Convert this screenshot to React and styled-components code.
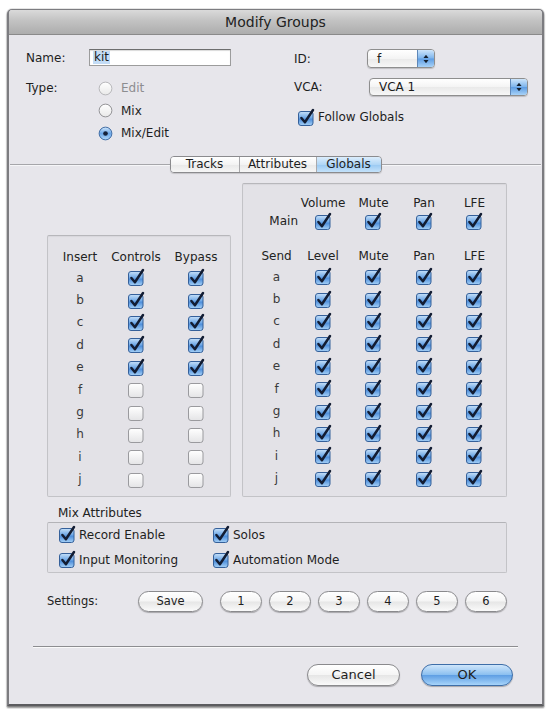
import React from "react";
import styled, { createGlobalStyle } from "styled-components";

const GlobalStyle = createGlobalStyle`
  html, body { margin: 0; padding: 0; background: #ffffff; }
  body {
    font-family: "DejaVu Sans", "Liberation Sans", sans-serif;
    font-size: 12px;
    color: #1c1c1c;
  }
`;

const Page = styled.div`
  box-sizing: border-box;
  width: 548px;
  height: 709px;
  padding: 9px 0 0 7px;
`;

const Window = styled.div`
  box-sizing: border-box;
  width: 537px;
  height: 697px;
  display: flex;
  flex-direction: column;
  background: #e7e6eb;
  border: 2px solid #7c7c80;
  border-top-width: 1px;
  border-bottom-color: #5c5c5f;
  border-radius: 5px 5px 0 0;
  box-shadow: 0 0 0 1px rgba(0, 0, 0, 0.1), 0 2px 2px rgba(0, 0, 0, 0.45);
  overflow: hidden;
`;

const TitleBar = styled.div`
  flex: none;
  height: 24px;
  display: flex;
  align-items: center;
  justify-content: center;
  background: linear-gradient(#dadada, #c2c2c2 45%, #adadad);
  border-bottom: 1px solid #8a8a8a;
  font-size: 14px;
  color: #222;
`;

const TopSection = styled.div`
  display: flex;
  padding: 14px 0 0 17px;
`;

const Column = styled.div`
  display: flex;
  flex-direction: column;
  width: ${(p) => (p.$w ? `${p.$w}px` : "auto")};
`;

const FieldRow = styled.div`
  display: flex;
  align-items: center;
  height: ${(p) => p.$h}px;
  margin-top: ${(p) => p.$mt || 0}px;
`;

const Label = styled.span`
  flex: none;
  width: ${(p) => p.$w}px;
  color: #1e1e1e;
`;

const TextInput = styled.div`
  box-sizing: border-box;
  width: 142px;
  height: 17px;
  background: #fff;
  border: 1px solid #9c9c9c;
  border-top-color: #6e6e6e;
  box-shadow: inset 0 1px 1px rgba(0, 0, 0, 0.15);
  display: flex;
  align-items: center;
  padding-left: 3px;
`;

const Selected = styled.span`
  background: #c3dcf6;
  padding: 0 1px;
  line-height: 13px;
`;

const Select = styled.div`
  box-sizing: border-box;
  width: ${(p) => p.$w}px;
  height: ${(p) => p.$h}px;
  margin-left: ${(p) => p.$ml || 0}px;
  display: flex;
  align-items: stretch;
  background: linear-gradient(#ffffff, #f4f4f4 50%, #e9e9e9 51%, #f7f7f7);
  border: 1px solid #8e8e8e;
  border-radius: 4px;
  box-shadow: 0 1px 1px rgba(0, 0, 0, 0.18);
  overflow: hidden;
`;

const SelectText = styled.span`
  flex: 1;
  display: flex;
  align-items: center;
  padding-left: 9px;
  font-size: 12px;
`;

const Stepper = styled.span`
  flex: none;
  width: 16px;
  display: flex;
  align-items: center;
  justify-content: center;
  background: linear-gradient(#cde5fb, #7fb5ec 48%, #5e9de3 52%, #a8d2f7);
  border-left: 1px solid #5e87b8;
`;

const OptionRow = styled.label`
  display: flex;
  align-items: center;
  gap: ${(p) => (p.$gap != null ? p.$gap : 4)}px;
  margin-left: ${(p) => p.$ml || 0}px;
  color: ${(p) => (p.$disabled ? "#8d8d90" : "#1e1e1e")};
  white-space: nowrap;
`;

const IconSvg = styled.svg`
  flex: none;
  display: block;
`;

const TabPane = styled.div`
  margin: 19px 1px 0;
  border-top: 1px solid #a6a6aa;
  box-shadow: inset 0 1px 0 #f6f6f8;
`;

const TabStripRow = styled.div`
  display: flex;
  justify-content: center;
  margin-top: -9px;
`;

const TabStrip = styled.div`
  display: flex;
  height: 17px;
  box-sizing: border-box;
  border: 1px solid #8b8b8e;
  border-radius: 4px;
  overflow: hidden;
  box-shadow: 0 1px 1px rgba(0, 0, 0, 0.15);
`;

const Tab = styled.div`
  box-sizing: border-box;
  width: ${(p) => p.$w}px;
  display: flex;
  align-items: center;
  justify-content: center;
  font-size: 12px;
  color: #1e1e1e;
  background: ${(p) =>
    p.$active
      ? "linear-gradient(#dcedfc, #b0d6f6 50%, #98c8f2 51%, #c4e2fa)"
      : "linear-gradient(#ffffff, #f3f3f3 50%, #e8e8e8 51%, #f6f6f6)"};
  & + & {
    border-left: 1px solid #a9a9ac;
  }
`;

const PaneContent = styled.div`
  padding-left: 37px;
`;

const PanelsRow = styled.div`
  display: flex;
  align-items: flex-end;
  gap: 11px;
  margin-top: 10px;
`;

const GroupBox = styled.div`
  box-sizing: border-box;
  width: ${(p) => p.$w}px;
  height: ${(p) => p.$h}px;
  border: 1px solid #c3c3c7;
  border-top-color: #b7b7bb;
  border-radius: 2px;
  background: #e3e2e7;
  box-shadow: inset 0 1px 1px rgba(0, 0, 0, 0.05);
  padding: ${(p) => p.$pad};
`;

const MatrixGrid = styled.div`
  display: grid;
  grid-template-columns: ${(p) => p.$cols};
  grid-auto-rows: 22.4px;
  align-items: center;
  justify-items: center;
`;

const HeaderGrid = styled.div`
  display: grid;
  grid-template-columns: ${(p) => p.$cols};
  height: ${(p) => p.$h}px;
  margin-top: ${(p) => p.$mt || 0}px;
  align-items: center;
  justify-items: center;
`;

const ColHead = styled.span`
  color: #222;
  white-space: nowrap;
  justify-self: ${(p) => p.$align || "center"};
`;

const RowLetter = styled.span`
  color: #3a3a3a;
`;

const MixLabel = styled.div`
  margin: 9px 0 0 11px;
  line-height: 14px;
  color: #222;
`;

const MixBox = styled.div`
  box-sizing: border-box;
  width: 460px;
  height: 51px;
  margin-top: 2px;
  border: 1px solid #c3c3c7;
  border-top-color: #b3b3b7;
  border-radius: 2px;
  background: #e3e2e7;
  display: grid;
  grid-template-columns: 154px auto;
  grid-auto-rows: 25px;
  align-content: center;
  align-items: center;
  padding-left: 10px;
`;

const SettingsRow = styled.div`
  display: flex;
  align-items: center;
  height: 21px;
  margin-top: 18px;
`;

const SettingsLabel = styled.span`
  width: 91px;
  flex: none;
  font-size: 11.5px;
  color: #222;
`;

const NumberGroup = styled.div`
  display: flex;
  gap: 7px;
  margin-left: 17px;
`;

const PillButton = styled.button`
  box-sizing: border-box;
  width: ${(p) => p.$w}px;
  height: ${(p) => p.$h || 21}px;
  padding: 0;
  font-family: inherit;
  font-size: ${(p) => p.$fs || 11.5}px;
  color: #1e1e1e;
  border-radius: 11px;
  border: 1px solid ${(p) => (p.$primary ? "#3e6ea8" : "#8a8a8d")};
  background: ${(p) =>
    p.$primary
      ? "linear-gradient(#cfe6fb, #8cc0f0 48%, #5f9fe4 52%, #a7d4fa)"
      : "linear-gradient(#ffffff, #f5f5f5 48%, #e6e6e6 52%, #fafafa)"};
  box-shadow: 0 1px 1px rgba(0, 0, 0, 0.28);
  display: flex;
  align-items: center;
  justify-content: center;
`;

const Separator = styled.div`
  margin: 34px 24px 0;
  border-top: 1px solid #8d8d90;
  border-bottom: 1px solid #fafafa;
`;

const Footer = styled.div`
  display: flex;
  justify-content: flex-end;
  gap: 21px;
  margin-top: 16px;
  padding-right: 29px;
`;

/* ---------- drawings ---------- */

const CheckBox = ({ checked = true }) => (
  <IconSvg width="19" height="19" viewBox="0 0 19 19" aria-hidden="true">
    <defs>
      <linearGradient id="cbOn" x1="0" y1="0" x2="0" y2="1">
        <stop offset="0" stopColor="#c7e1fa" />
        <stop offset="0.45" stopColor="#6fa8e6" />
        <stop offset="0.55" stopColor="#4f8fdb" />
        <stop offset="1" stopColor="#a6d1f7" />
      </linearGradient>
      <linearGradient id="cbOff" x1="0" y1="0" x2="0" y2="1">
        <stop offset="0" stopColor="#ffffff" />
        <stop offset="1" stopColor="#e4e4e6" />
      </linearGradient>
    </defs>
    <rect
      x="1.5"
      y="3.5"
      width="14.5"
      height="14"
      rx="2.5"
      fill={checked ? "url(#cbOn)" : "url(#cbOff)"}
      stroke={checked ? "#35609a" : "#9a9a9e"}
    />
    {checked && (
      <path
        d="M4.4 10 L7.9 14.2 L16 2"
        fill="none"
        stroke="#131d33"
        strokeWidth="2.5"
        strokeLinecap="round"
        strokeLinejoin="round"
      />
    )}
  </IconSvg>
);

const Radio = ({ selected, disabled }) => (
  <IconSvg width="15" height="15" viewBox="0 0 16 16" aria-hidden="true">
    <defs>
      <linearGradient id="rdOn" x1="0" y1="0" x2="0" y2="1">
        <stop offset="0" stopColor="#cfe6fb" />
        <stop offset="0.5" stopColor="#6aa6e8" />
        <stop offset="1" stopColor="#b2d8f9" />
      </linearGradient>
      <linearGradient id="rdOff" x1="0" y1="0" x2="0" y2="1">
        <stop offset="0" stopColor="#ffffff" />
        <stop offset="1" stopColor="#e9e9e9" />
      </linearGradient>
    </defs>
    <circle
      cx="8"
      cy="8"
      r="6.8"
      fill={selected ? "url(#rdOn)" : "url(#rdOff)"}
      stroke={selected ? "#3b68a0" : disabled ? "#b4b4b7" : "#8e8e91"}
    />
    {selected && <circle cx="8" cy="8" r="2.5" fill="#16223a" />}
  </IconSvg>
);

const StepArrows = () => (
  <IconSvg width="8" height="12" viewBox="0 0 8 12" aria-hidden="true">
    <path d="M1.5 5 L4 1.8 L6.5 5 Z" fill="#15202e" />
    <path d="M1.5 7 L4 10.2 L6.5 7 Z" fill="#15202e" />
  </IconSvg>
);

/* ---------- data ---------- */

const letters = ["a", "b", "c", "d", "e", "f", "g", "h", "i", "j"];
const insertOn = ["a", "b", "c", "d", "e"];

const RIGHT_COLS = "43px 50px 51px 50px 51px";
const LEFT_COLS = "50px 62px 58px";

export default function App() {
  return (
    <>
      <GlobalStyle />
      <Page>
        <Window>
          <TitleBar>Modify Groups</TitleBar>

          <TopSection>
            <Column $w={268}>
              <FieldRow $h={17}>
                <Label $w={63}>Name:</Label>
                <TextInput>
                  <Selected>kit</Selected>
                </TextInput>
              </FieldRow>
              <FieldRow $h={22.5} $mt={11}>
                <Label $w={63}>Type:</Label>
                <OptionRow $ml={9} $gap={8} $disabled>
                  <Radio disabled />
                  Edit
                </OptionRow>
              </FieldRow>
              <FieldRow $h={22.5}>
                <Label $w={63} />
                <OptionRow $ml={9} $gap={8}>
                  <Radio />
                  Mix
                </OptionRow>
              </FieldRow>
              <FieldRow $h={22.5}>
                <Label $w={63} />
                <OptionRow $ml={9} $gap={8}>
                  <Radio selected />
                  Mix/Edit
                </OptionRow>
              </FieldRow>
            </Column>

            <Column>
              <FieldRow $h={19}>
                <Label $w={73}>ID:</Label>
                <Select $w={68} $h={19}>
                  <SelectText>f</SelectText>
                  <Stepper>
                    <StepArrows />
                  </Stepper>
                </Select>
              </FieldRow>
              <FieldRow $h={18} $mt={10}>
                <Label $w={73}>VCA:</Label>
                <Select $w={159} $h={18} $ml={2}>
                  <SelectText>VCA 1</SelectText>
                  <Stepper>
                    <StepArrows />
                  </Stepper>
                </Select>
              </FieldRow>
              <FieldRow $h={18} $mt={12}>
                <OptionRow $ml={3} $gap={2}>
                  <CheckBox checked />
                  Follow Globals
                </OptionRow>
              </FieldRow>
            </Column>
          </TopSection>

          <TabPane>
            <TabStripRow>
              <TabStrip>
                <Tab $w={68}>Tracks</Tab>
                <Tab $w={77}>Attributes</Tab>
                <Tab $w={65} $active>
                  Globals
                </Tab>
              </TabStrip>
            </TabStripRow>

            <PaneContent>
              <PanelsRow>
                <GroupBox $w={184} $h={262} $pad="11px 0 0 7px">
                  <HeaderGrid $cols={LEFT_COLS} $h={20}>
                    <ColHead>Insert</ColHead>
                    <ColHead>Controls</ColHead>
                    <ColHead>Bypass</ColHead>
                  </HeaderGrid>
                  <MatrixGrid $cols={LEFT_COLS}>
                    {letters.map((l) => (
                      <React.Fragment key={l}>
                        <RowLetter>{l}</RowLetter>
                        <CheckBox checked={insertOn.includes(l)} />
                        <CheckBox checked={insertOn.includes(l)} />
                      </React.Fragment>
                    ))}
                  </MatrixGrid>
                </GroupBox>

                <GroupBox $w={265} $h={314} $pad="10px 0 0 12px">
                  <HeaderGrid $cols={RIGHT_COLS} $h={18}>
                    <span />
                    <ColHead>Volume</ColHead>
                    <ColHead>Mute</ColHead>
                    <ColHead>Pan</ColHead>
                    <ColHead>LFE</ColHead>
                  </HeaderGrid>
                  <HeaderGrid $cols={RIGHT_COLS} $h={18}>
                    <ColHead $align="end">Main</ColHead>
                    <CheckBox />
                    <CheckBox />
                    <CheckBox />
                    <CheckBox />
                  </HeaderGrid>
                  <HeaderGrid $cols={RIGHT_COLS} $h={20} $mt={16}>
                    <ColHead>Send</ColHead>
                    <ColHead>Level</ColHead>
                    <ColHead>Mute</ColHead>
                    <ColHead>Pan</ColHead>
                    <ColHead>LFE</ColHead>
                  </HeaderGrid>
                  <MatrixGrid $cols={RIGHT_COLS}>
                    {letters.map((l) => (
                      <React.Fragment key={l}>
                        <RowLetter>{l}</RowLetter>
                        <CheckBox />
                        <CheckBox />
                        <CheckBox />
                        <CheckBox />
                      </React.Fragment>
                    ))}
                  </MatrixGrid>
                </GroupBox>
              </PanelsRow>

              <MixLabel>Mix Attributes</MixLabel>
              <MixBox>
                <OptionRow $gap={2}>
                  <CheckBox />
                  Record Enable
                </OptionRow>
                <OptionRow $gap={2}>
                  <CheckBox />
                  Solos
                </OptionRow>
                <OptionRow $gap={2}>
                  <CheckBox />
                  Input Monitoring
                </OptionRow>
                <OptionRow $gap={2}>
                  <CheckBox />
                  Automation Mode
                </OptionRow>
              </MixBox>

              <SettingsRow>
                <SettingsLabel>Settings:</SettingsLabel>
                <PillButton $w={65}>Save</PillButton>
                <NumberGroup>
                  {["1", "2", "3", "4", "5", "6"].map((n) => (
                    <PillButton key={n} $w={42}>
                      {n}
                    </PillButton>
                  ))}
                </NumberGroup>
              </SettingsRow>
            </PaneContent>
          </TabPane>

          <Separator />

          <Footer>
            <PillButton $w={93} $h={22} $fs={13}>
              Cancel
            </PillButton>
            <PillButton $w={92} $h={22} $fs={13} $primary>
              OK
            </PillButton>
          </Footer>
        </Window>
      </Page>
    </>
  );
}
